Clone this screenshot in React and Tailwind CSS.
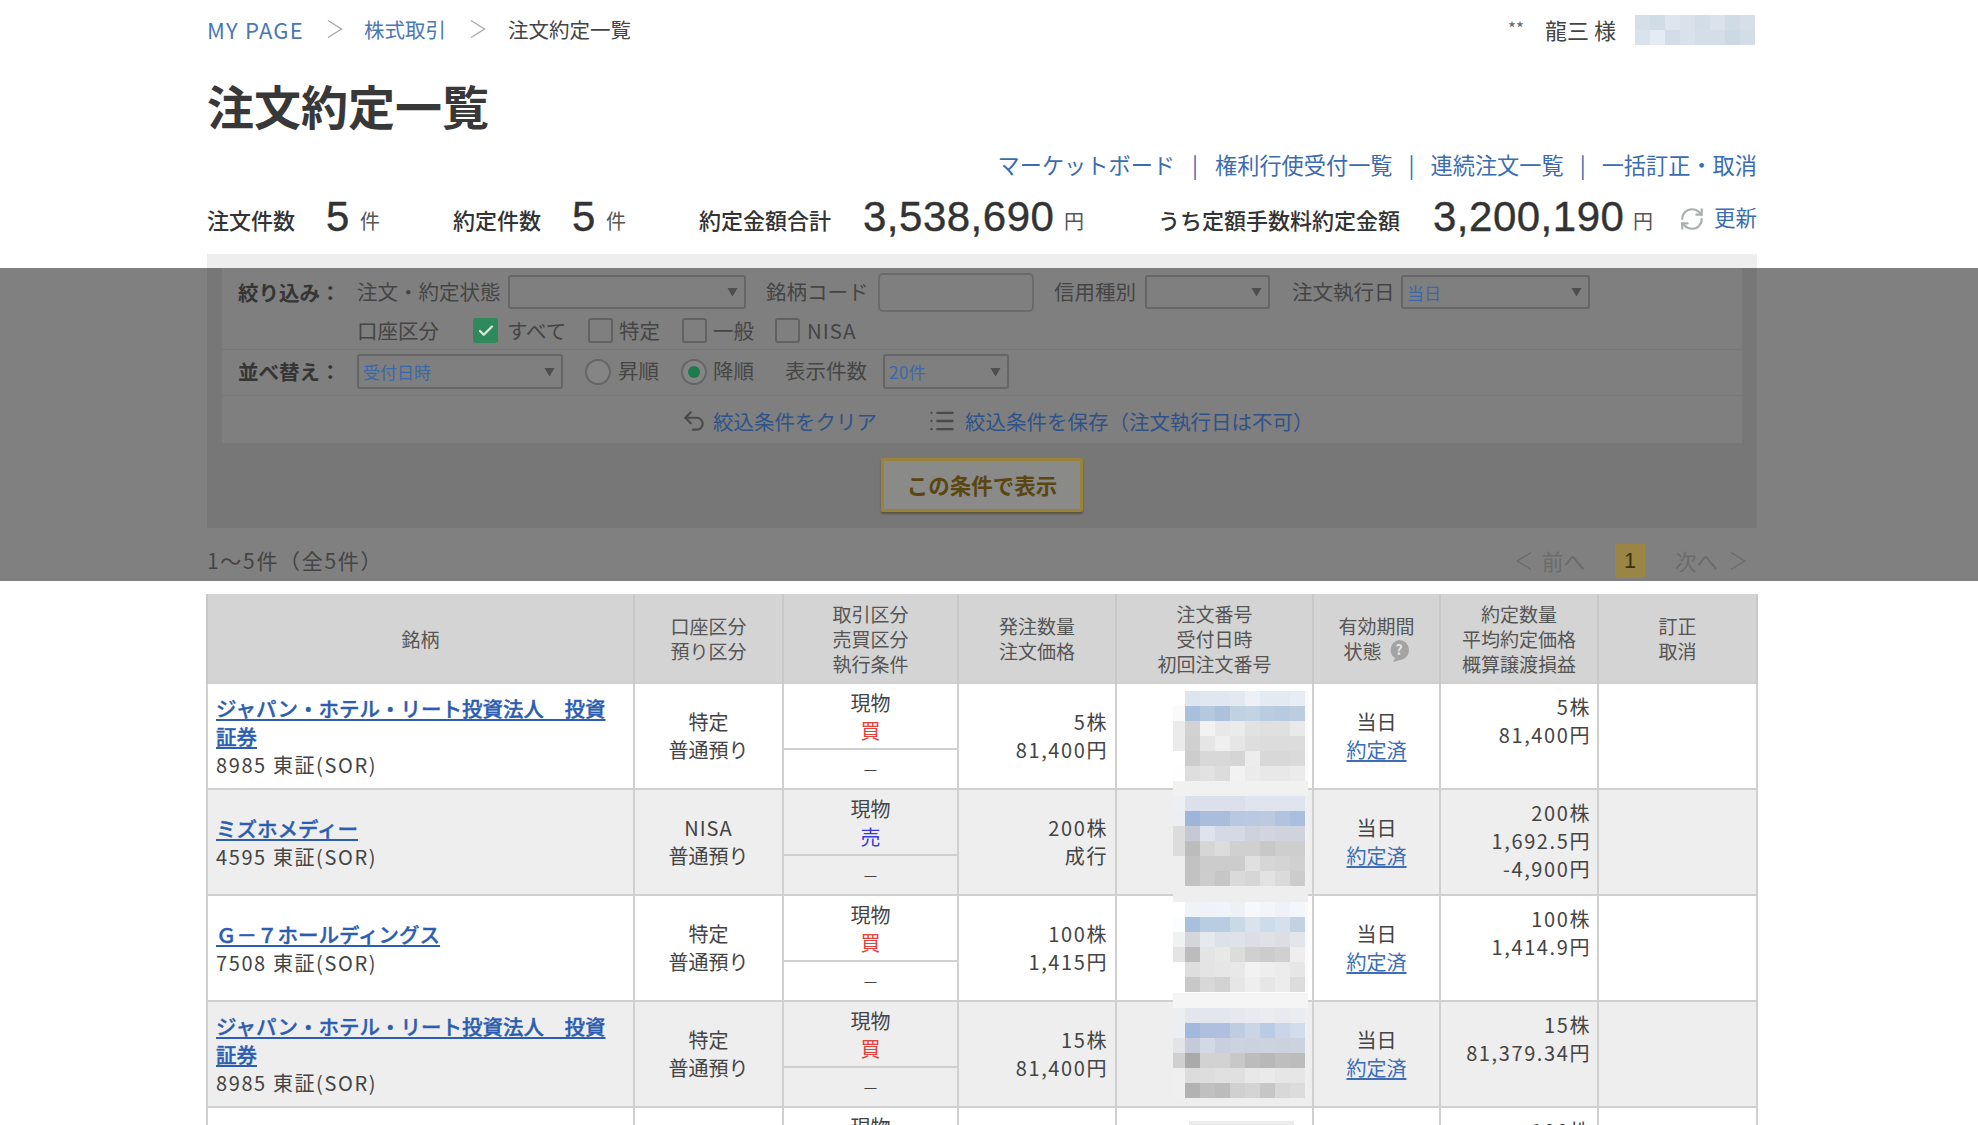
import React from "react";
import { RefreshCw, Undo2, List, Check } from "lucide-react";

const USER = [
  ["#d6dfe8", "#d0dde6", "#dde5ee", "#d9e2eb", "#d2dde7", "#dae3ec", "#cfdbe5", "#d6dfe8"],
  ["#d9e3ed", "#e4ebf4", "#d3dce8", "#d9e2ec", "#d3dee8", "#d3dee8", "#ccd9e5", "#d3dde7"],
];

const MOSAICS = [
  {
    strip: null,
    left: ["#ffffff", "#fafafa", "#ebebeb", "#ebebeb", "#ffffff", "#fefefe"],
    edge: "#fafafa",
    rows: [
      ["#dde6f0", "#e0e7f0", "#e0e7f0", "#e2e9f0", "#edf1f6", "#e4eaf2", "#e4eaf2", "#e8edf3"],
      ["#a9c0dc", "#b5c8de", "#abc1dc", "#c0d1e2", "#c3d3e4", "#b9cce0", "#b7cadf", "#bccde0"],
      ["#d2d2d2", "#f2f2f2", "#e8e8e8", "#ebebeb", "#e2e2e2", "#e0e0e0", "#e0e0e0", "#e9e9e9"],
      ["#d0d0d0", "#e5e5e5", "#efefef", "#e6e6e6", "#dedede", "#dcdcdc", "#dcdcdc", "#dcdcdc"],
      ["#cdcdcd", "#d8d8d8", "#d8d8d8", "#d5d5d5", "#ededed", "#d8d8d8", "#d8d8d8", "#dadada"],
      ["#dedede", "#e2e2e2", "#dcdcdc", "#f2f2f2", "#ebebeb", "#e8e8e8", "#e8e8e8", "#ebebeb"],
    ],
  },
  {
    strip: "#f1f1f1",
    left: ["#eeeff2", "#eceef2", "#dcdcdc", "#dcdcdc", "#eeeeee", "#eeeeee"],
    edge: "#f0f0f0",
    rows: [
      ["#dbe0ec", "#dbe0ec", "#dbe0ec", "#dbe0ec", "#e0e4ee", "#e0e4ee", "#e0e4ee", "#e0e4ee"],
      ["#9cb5d9", "#aabddd", "#a9bddd", "#b8c8e0", "#bac9e1", "#bccae0", "#b2c3e0", "#aabfdd"],
      ["#c5c9d3", "#dfe3ed", "#d5d9e5", "#d5d9e5", "#ced2dc", "#d2d5df", "#d0d3dd", "#d0d3dd"],
      ["#bcbcbc", "#d6d6d6", "#dcdcdc", "#d0d0d0", "#d0d0d0", "#c8c8c8", "#cecece", "#cecece"],
      ["#c2c2c2", "#cccccc", "#cccccc", "#cccccc", "#e0e0e0", "#d6d6d6", "#d4d4d4", "#d0d0d0"],
      ["#c2c2c2", "#cdcdcd", "#c6c6c6", "#dadada", "#d6d6d6", "#e2e2e2", "#dadada", "#cccccc"],
    ],
  },
  {
    strip: "#eeeeee",
    left: ["#ffffff", "#fbfdff", "#f0f2f2", "#e4e4e4", "#ffffff", "#ffffff"],
    edge: "#fafafa",
    rows: [
      ["#eff3f8", "#eff3f8", "#f0f4f8", "#edf1f6", "#f6f8fb", "#f3f5f9", "#eef2f6", "#f3f6fa"],
      ["#a6c0de", "#b9cde2", "#b9cde2", "#c9d9e5", "#d8e3ee", "#cddcea", "#d4e1ec", "#c3d2e3"],
      ["#d4d6da", "#e6e9ee", "#dde1e8", "#dfe2e9", "#dcdee3", "#dfe1e6", "#dcdee3", "#e2e5ea"],
      ["#bcbcbc", "#e4e4e4", "#e8e8e8", "#dcdcdc", "#d0d0d0", "#cccccc", "#d0d0d0", "#eeeeee"],
      ["#dedede", "#e4e4e4", "#e6e6e6", "#e8e8e8", "#f2f2f2", "#eeeeee", "#ececec", "#e6e6e6"],
      ["#c8c8c8", "#d8d8d8", "#d2d2d2", "#e6e6e6", "#eeeeee", "#e6e6e6", "#ececec", "#dcdcdc"],
    ],
  },
  {
    strip: "#f5f5f5",
    left: ["#eceef0", "#eceef2", "#e2e4e8", "#d0d0d0", "#efefef", "#efefef"],
    edge: "#efefef",
    rows: [
      ["#e4e6ee", "#e4e6ee", "#e4e6ee", "#e6e8ee", "#e8eaf0", "#eaecf0", "#e8eaef", "#eaecf0"],
      ["#a0b9dc", "#aec0de", "#aec0de", "#bfcde2", "#cad5e7", "#b8cce3", "#cbd5ea", "#d1dcec"],
      ["#c5cadb", "#d3d8e6", "#c9cfdf", "#ccd2e0", "#ccd1df", "#cdd2df", "#ccd1de", "#cdd2df"],
      ["#aaaaaa", "#d2d2d2", "#d2d2d2", "#c8c8c8", "#bcbcbc", "#b8b8b8", "#bebebe", "#bcbcbc"],
      ["#dcdcdc", "#dddddd", "#e0e0e0", "#e0e0e0", "#e8e8e8", "#eaeaea", "#e6e6e6", "#e6e6e6"],
      ["#b2b2b2", "#c0c0c0", "#bcbcbc", "#d0d0d0", "#d4d4d4", "#c6c6c6", "#d8d8d8", "#dcdcdc"],
    ],
  },
];

const ORDERS = [
  { name: "ジャパン・ホテル・リート投資法人　投資証券", code: "8985 東証(SOR)", acct: "特定", side: "買", qty: "5株", price: "81,400円", done: ["5株", "81,400円"] },
  { name: "ミズホメディー", code: "4595 東証(SOR)", acct: "NISA", side: "売", qty: "200株", price: "成行", done: ["200株", "1,692.5円", "-4,900円"] },
  { name: "Ｇ－７ホールディングス", code: "7508 東証(SOR)", acct: "特定", side: "買", qty: "100株", price: "1,415円", done: ["100株", "1,414.9円"] },
  { name: "ジャパン・ホテル・リート投資法人　投資証券", code: "8985 東証(SOR)", acct: "特定", side: "買", qty: "15株", price: "81,400円", done: ["15株", "81,379.34円"] },
];

function Mosaic({ data, first }) {
  return (
    <svg
      width="135"
      height="105"
      viewBox="0 0 135 105"
      className={first ? "absolute left-[56px] top-[-8px] z-10" : "absolute left-[56px] top-[-9px] z-10"}
    >
      {data.strip && <rect x="0" y="0" width="135" height="15" fill={data.strip} />}
      {data.rows.map((row, r) => (
        <g key={r}>
          <rect x="0" y={15 + r * 15} width="12" height="15" fill={data.left[r]} />
          {row.map((c, i) => (
            <rect key={i} x={12 + i * 15} y={15 + r * 15} width="15" height="15" fill={c} />
          ))}
          <rect x="132" y={15 + r * 15} width="3" height="15" fill={data.edge} />
        </g>
      ))}
    </svg>
  );
}

function Angle({ left, className }) {
  return (
    <svg width="16" height="20" viewBox="0 0 16 20" fill="none" stroke="currentColor" strokeWidth="1.4" className={className}>
      <path d={left ? "M15 1.5 1.5 10 15 18.5" : "M1 1.5 14.5 10 1 18.5"} />
    </svg>
  );
}

function Tri() {
  return (
    <svg width="11" height="10" viewBox="0 0 11 10" className="shrink-0">
      <path d="M0.5 1h10L5.5 9.5z" fill="#4e4e4e" />
    </svg>
  );
}

function Box({ checked }) {
  return checked ? (
    <span className="flex h-[25px] w-[25px] shrink-0 items-center justify-center rounded-[3px] bg-[#2e8a5c] text-[#d8e8dc]">
      <Check size={18} strokeWidth={3} />
    </span>
  ) : (
    <span className="block h-[25px] w-[25px] shrink-0 rounded-[3px] border-2 border-[#626262]" />
  );
}

function Radio({ on }) {
  return (
    <span className="flex h-[26px] w-[26px] shrink-0 items-center justify-center rounded-full border-2 border-[#666] bg-[#858585]">
      {on && <span className="block h-3 w-3 rounded-full bg-[#1f7a4d]" />}
    </span>
  );
}

export default function App() {
  return (
    <div className="h-[1125px] overflow-hidden bg-white font-['Noto_Sans_CJK_JP','Noto_Sans',sans-serif] text-[#444]">
      <div className="ml-[207px] w-[1550px]">
        <div className="flex h-[60px] items-center pb-[2px] text-[20.5px]">
          <span className="w-[96px] whitespace-nowrap text-[22px] tracking-[1.2px] text-[#4a78b5]">MY PAGE</span>
          <Angle className="ml-[24px] shrink-0 text-[#aaa]" />
          <span className="ml-[21px] w-[82px] whitespace-nowrap text-[#4a78b5]">株式取引</span>
          <Angle className="ml-[24px] shrink-0 text-[#aaa]" />
          <span className="ml-[22px] whitespace-nowrap">注文約定一覧</span>
          <span className="mb-[3px] ml-auto mr-[21px] text-[17px] text-[#666]">**</span>
          <span className="mr-[17px] w-[73px] whitespace-nowrap text-[22px]">龍三 様</span>
          <svg width="120" height="30" viewBox="0 0 120 30" className="mr-[2px] shrink-0 translate-y-[1px]">
            {USER.map((row, r) => row.map((c, i) => <rect key={`${r}${i}`} x={i * 15} y={r * 15} width="15" height="15" fill={c} />))}
          </svg>
        </div>

        <h1 className="flex h-[93px] items-center pb-[4px] text-[47px] font-bold leading-none text-[#383838]">注文約定一覧</h1>

        <div className="flex h-[26px] items-center justify-end whitespace-nowrap pb-[2px] text-[22.2px] text-[#3b6cb0]">
          <span>マーケットボード</span>
          <span className="mx-[17px]">|</span>
          <span>権利行使受付一覧</span>
          <span className="mx-[16px]">|</span>
          <span>連続注文一覧</span>
          <span className="mx-[16px]">|</span>
          <span>一括訂正・取消</span>
        </div>

        <div className="flex h-[75px] items-baseline whitespace-nowrap pt-[13px] text-[#333]">
          <span className="w-[88px] text-[22px] font-medium">注文件数</span>
          <span className="ml-[31px] w-[34px] translate-y-[2px] font-['Liberation_Sans',sans-serif] text-[42px] leading-[46px] [-webkit-text-stroke:0.4px_#333]">5</span>
          <span className="w-[66px] text-[20px] text-[#555]">件</span>
          <span className="ml-[27px] w-[88px] text-[22px] font-medium">約定件数</span>
          <span className="ml-[31px] w-[34px] translate-y-[2px] font-['Liberation_Sans',sans-serif] text-[42px] leading-[46px] [-webkit-text-stroke:0.4px_#333]">5</span>
          <span className="w-[93px] text-[20px] text-[#555]">件</span>
          <span className="w-[131px] text-[22px] font-medium">約定金額合計</span>
          <span className="ml-[33px] w-[201px] translate-y-[2px] font-['Liberation_Sans',sans-serif] text-[42px] leading-[46px] tracking-[0.5px] [-webkit-text-stroke:0.4px_#333]">3,538,690</span>
          <span className="w-[94px] text-[20px] text-[#555]">円</span>
          <span className="w-[241px] text-[22px] font-medium">うち定額手数料約定金額</span>
          <span className="ml-[34px] w-[200px] translate-y-[2px] font-['Liberation_Sans',sans-serif] text-[42px] leading-[46px] tracking-[0.5px] [-webkit-text-stroke:0.4px_#333]">3,200,190</span>
          <span className="w-[46px] text-[20px] text-[#555]">円</span>
          <RefreshCw size={26} strokeWidth={2} className="mr-[9px] shrink-0 -translate-y-[4px] self-center text-[#aab0b0]" />
          <span className="-translate-y-[3px] text-[21.5px] text-[#3b6cb0]">更新</span>
        </div>

        <div className="h-[14px] bg-[#eeeeee]" />
      </div>

      <div className="h-[313px] bg-[#808080]">
        <div className="ml-[207px] w-[1550px]">
          <div className="h-[260px] bg-[#777777] px-[15px]">
            <div className="h-[175px] w-[1520px] bg-[#7f7f7f] text-[20.5px] text-[#454545]">
              <div className="flex h-[48px] items-center whitespace-nowrap pl-[16px]">
                <span className="w-[119px] font-bold text-[#353535]">絞り込み：</span>
                <span className="w-[142px] -translate-y-[1px]">注文・約定状態</span>
                <div className="ml-[9px] flex h-[34px] w-[238px] items-center justify-end rounded-[3px] border-2 border-[#666] pr-[6px]"><Tri /></div>
                <span className="ml-[20px] w-[102px] -translate-y-[1px]">銘柄コード</span>
                <div className="ml-[10px] h-[39px] w-[156px] rounded-[5px] border-2 border-[#6a6a6a]" />
                <span className="ml-[20px] w-[83px] -translate-y-[1px]">信用種別</span>
                <div className="ml-[8px] flex h-[34px] w-[125px] items-center justify-end rounded-[3px] border-2 border-[#666] pr-[6px]"><Tri /></div>
                <span className="ml-[22px] w-[100px] -translate-y-[1px]">注文執行日</span>
                <div className="ml-[9px] flex h-[34px] w-[189px] items-center justify-between rounded-[3px] border-2 border-[#666] pl-[4px] pr-[6px] text-[17px] text-[#3a68a8]"><span className="translate-y-[1px]">当日</span><Tri /></div>
              </div>
              <div className="flex h-[33px] items-center whitespace-nowrap pb-[4px] pl-[135px]">
                <span className="w-[116px]">口座区分</span>
                <Box checked />
                <span className="ml-[9px] w-[81px]">すべて</span>
                <Box />
                <span className="ml-[6px] w-[63px]">特定</span>
                <Box />
                <span className="ml-[6px] w-[62px]">一般</span>
                <Box />
                <span className="ml-[7px] tracking-[1px]">NISA</span>
              </div>
              <div className="flex h-[46px] items-center whitespace-nowrap border-t border-[#777] pb-[2px] pl-[16px]">
                <span className="w-[119px] font-bold text-[#353535]">並べ替え：</span>
                <div className="flex h-[35px] w-[206px] items-center justify-between rounded-[3px] border-2 border-[#666] pl-[4px] pr-[6px] text-[17px] text-[#3a68a8]">受付日時<Tri /></div>
                <span className="ml-[22px]"><Radio /></span>
                <span className="ml-[7px] w-[63px] -translate-y-[1px]">昇順</span>
                <Radio on />
                <span className="ml-[6px] w-[72px] -translate-y-[1px]">降順</span>
                <span className="w-[98px] -translate-y-[1px]">表示件数</span>
                <div className="flex h-[35px] w-[126px] items-center justify-between rounded-[3px] border-2 border-[#666] pl-[4px] pr-[6px] text-[17px] tracking-[0.5px] text-[#3a68a8]">20件<Tri /></div>
              </div>
              <div className="flex h-[48px] items-center whitespace-nowrap border-t border-[#777] pl-[459px] pt-[3px] text-[#2f5288]">
                <Undo2 size={26} strokeWidth={2} className="shrink-0 text-[#4a4a4a]" />
                <span className="ml-[6px] w-[215px]">絞込条件をクリア</span>
                <List size={28} strokeWidth={2} className="shrink-0 text-[#4a4a4a]" />
                <span className="ml-[9px] text-[20.5px]">絞込条件を保存（注文執行日は不可）</span>
              </div>
            </div>
            <div className="flex h-[85px] items-start pl-[659px] pt-[15px]">
              <div className="flex h-[54px] w-[202px] items-center justify-center rounded-[2px] border-[3px] border-[#9a8238] bg-[#8a8a88] text-[21.5px] font-bold text-[#594610] shadow-[0_2px_2px_rgba(60,50,10,0.5)]">この条件で表示</div>
            </div>
          </div>
          <div className="flex h-[53px] items-center whitespace-nowrap pt-[13px] text-[21px]">
            <span className="tracking-[1.7px] text-[#444]">1〜5件（全5件）</span>
            <div className="ml-auto flex items-center pr-[11px] text-[21.5px] text-[#6b6b6b]">
              <Angle left className="shrink-0" />
              <span className="ml-[10px] w-[44px]">前へ</span>
              <span className="ml-[29px] flex h-[34px] w-[30px] items-center justify-center bg-[#9a8545] font-['Liberation_Sans',sans-serif] text-[#3a3010]">1</span>
              <span className="ml-[30px] w-[44px]">次へ</span>
              <Angle className="ml-[11px] shrink-0" />
            </div>
          </div>
        </div>
      </div>

      <div className="ml-[206px] mt-[13px] w-[1550px]">
        <table className="w-[1550px] table-fixed border-collapse text-[20px] leading-[28px]">
          <colgroup>
            <col className="w-[427px]" />
            <col className="w-[149px]" />
            <col className="w-[175px]" />
            <col className="w-[158px]" />
            <col className="w-[197px]" />
            <col className="w-[127px]" />
            <col className="w-[158px]" />
            <col className="w-[159px]" />
          </colgroup>
          <thead>
            <tr className="h-[89px] bg-[#d4d4d4] text-center text-[19px] leading-[25px] text-[#555]">
              <th className="border-x-2 border-[#c8c8c8] font-normal">銘柄</th>
              <th className="border-x-2 border-[#c8c8c8] font-normal">口座区分<br />預り区分</th>
              <th className="border-x-2 border-[#c8c8c8] font-normal">取引区分<br />売買区分<br />執行条件</th>
              <th className="border-x-2 border-[#c8c8c8] font-normal">発注数量<br />注文価格</th>
              <th className="border-x-2 border-[#c8c8c8] font-normal">注文番号<br />受付日時<br />初回注文番号</th>
              <th className="border-x-2 border-[#c8c8c8] font-normal">
                有効期間<br />
                <span className="inline-flex items-center gap-[6px]">
                  状態
                  <svg width="22" height="24" viewBox="0 0 22 24">
                    <path d="M11 1a10 10 0 0 1 2 19.8L5 23l2.2-3.8A10 10 0 0 1 11 1z" fill="#a3a3a3" />
                    <text x="11" y="16" textAnchor="middle" fontSize="14" fontWeight="700" fill="#e4e4e4">?</text>
                  </svg>
                </span>
              </th>
              <th className="border-x-2 border-[#c8c8c8] font-normal">約定数量<br />平均約定価格<br />概算譲渡損益</th>
              <th className="border-x-2 border-[#c8c8c8] font-normal">訂正<br />取消</th>
            </tr>
          </thead>
          <tbody>
            {ORDERS.map((o, i) => (
              <tr key={i} className={i % 2 ? "h-[106px] bg-[#eeeeee]" : "h-[106px] bg-white"}>
                <td className="border-2 border-[#d0d0d0] pl-[8px] pr-[20px] align-middle">
                  <a className="block whitespace-normal text-[20.5px] font-medium text-[#2b5db0] underline underline-offset-2 [-webkit-text-stroke:0.35px_#2b5db0]">{o.name}</a>
                  <div className="mt-[1px] tracking-[1.6px]">{o.code}</div>
                </td>
                <td className="border-2 border-[#d0d0d0] text-center align-middle">
                  <span className={o.acct === "NISA" ? "tracking-[1px]" : ""}>{o.acct}</span><br />普通預り
                </td>
                <td className="border-2 border-[#d0d0d0] p-0 text-center align-top">
                  <div className="h-[66px] border-b-2 border-[#d0d0d0] pt-[5px]">
                    現物<br />
                    <span className={o.side === "買" ? "text-[#e5403a]" : "text-[#3a3ad8]"}>{o.side}</span>
                  </div>
                  <div className="flex h-[38px] items-center justify-center text-[15px]">—</div>
                </td>
                <td className="border-2 border-[#d0d0d0] pr-[7px] text-right align-middle tracking-[1.6px]">{o.qty}<br />{o.price}</td>
                <td className="border-2 border-[#d0d0d0] p-0">
                  <div className="relative h-[104px]">
                    <Mosaic data={MOSAICS[i]} first={i === 0} />
                  </div>
                </td>
                <td className="border-2 border-[#d0d0d0] text-center align-middle">
                  当日<br />
                  <a className="text-[#3d6db5] underline underline-offset-2">約定済</a>
                </td>
                <td className="border-2 border-[#d0d0d0] pr-[6px] pt-[9px] text-right align-top tracking-[1.6px]">
                  {o.done.map((d) => <div key={d}>{d}</div>)}
                </td>
                <td className="border-2 border-[#d0d0d0]" />
              </tr>
            ))}
            <tr className="h-[106px] bg-white">
              <td className="border-2 border-[#d0d0d0]" />
              <td className="border-2 border-[#d0d0d0]" />
              <td className="border-2 border-[#d0d0d0] p-0 pt-[5px] text-center align-top">現物</td>
              <td className="border-2 border-[#d0d0d0]" />
              <td className="border-2 border-[#d0d0d0] p-0 align-top">
                <div className="ml-[72px] mt-[13px] h-[4px] w-[105px] bg-[#ececec]" />
              </td>
              <td className="border-2 border-[#d0d0d0]" />
              <td className="border-2 border-[#d0d0d0] pr-[6px] pt-[9px] text-right align-top tracking-[1.6px]">100株</td>
              <td className="border-2 border-[#d0d0d0]" />
            </tr>
          </tbody>
        </table>
      </div>
    </div>
  );
}
